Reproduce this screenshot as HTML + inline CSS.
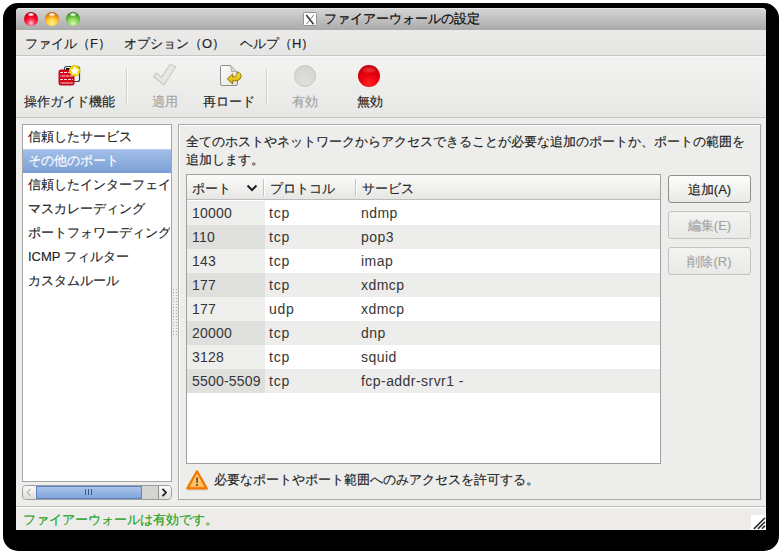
<!DOCTYPE html>
<html><head><meta charset="utf-8">
<style>
*{box-sizing:border-box;margin:0;padding:0}
html,body{width:782px;height:554px;overflow:hidden;background:#fff;font-family:"Liberation Sans",sans-serif;font-size:13px;color:#1e1e1e;position:relative}
div{position:absolute}
.t{white-space:nowrap;line-height:13px;-webkit-text-stroke:0.15px currentColor}
.g{color:#a3a3a1}
#shadow{left:3px;top:3px;width:776px;height:548px;background:#000;border-radius:15px}
#win{left:16px;top:8px;width:750px;height:522px;background:#ededeb;border-radius:4px 4px 0 0}
#title{left:16px;top:8px;width:750px;height:22px;background:linear-gradient(#d4d4d4,#aaaaaa);border-top:1px solid #e6e6e6;border-radius:4px 4px 0 0}
.tl{top:12px;width:14px;height:14px;border-radius:50%}
#menu{left:16px;top:30px;width:750px;height:26px;background:linear-gradient(#ecebea,#e5e5e3);border-bottom:1px solid #c6c6c4}
#tool{left:16px;top:56px;width:750px;height:62px;background:linear-gradient(#f3f3f2,#e7e7e5);border-top:1px solid #fafafa;border-bottom:1px solid #c2c2c0}
.sep{top:69px;width:2px;height:36px;border-left:1px solid #cfcfcd;border-right:1px solid #fbfbfa}
#list{left:22px;top:124px;width:150px;height:358px;background:#fff;border:1px solid #a5a5a3}
.li{left:28px}
#sel{left:23px;top:149px;width:148px;height:24px;background:linear-gradient(#a2bee7,#7a9fd7);border-top:1px solid #b4ccee}
#sb{left:22px;top:485px;width:150px;height:15px;border:1px solid #9d9d9b;border-radius:4px;background:#d4d4d2;overflow:hidden}
#panel{left:178px;top:124px;width:583px;height:376px;border:1px solid #a9a9a7;box-shadow:inset 1px 1px 0 #fff}
#table{left:186px;top:174px;width:475px;height:290px;background:#fff;border:1px solid #a0a09e}
#thead{left:187px;top:175px;width:473px;height:25px;background:linear-gradient(#fbfbfa,#e6e6e4);border-bottom:1px solid #bcbcba}
.hs{top:179px;width:1px;height:17px;background:#c4c4c2;box-shadow:1px 0 0 #fff}
.row{left:187px;width:473px;height:24px}
.c1{left:0;top:0;width:78px;height:24px}
.num{left:192px}
.l{font-size:14px;letter-spacing:0.45px;-webkit-text-stroke:0;color:#363636}
.n{letter-spacing:0.2px}
.pr{letter-spacing:0.75px}
.btn{left:668px;width:83px;height:28px;border:1px solid #8f8f8d;border-radius:3px;background:linear-gradient(#fdfdfc,#e8e8e6);text-align:center}
.btn.dis{border-color:#c2c2c0;background:linear-gradient(#f3f3f2,#e9e9e7)}
#status{left:16px;top:506px;width:750px;height:24px;border-top:1px solid #c0bebb;background:#edecea;box-shadow:inset 0 1px 0 #fff}
</style></head><body>
<div id="shadow"></div>
<div id="win"></div>
<div id="title"></div>
<div class="tl" style="left:24px;background:radial-gradient(circle at 50% 80%,#ffc8d0 0,#ff3050 30%,#f00020 55%,#b00010 85%,#800010)"></div>
<div class="tl" style="left:45px;background:radial-gradient(circle at 50% 80%,#fff088 0,#ffd040 35%,#f09010 60%,#c05000 88%,#904000)"></div>
<div class="tl" style="left:66px;background:radial-gradient(circle at 50% 80%,#d8f8a8 0,#90d860 35%,#50b030 60%,#287818 88%,#1a5a10)"></div>
<svg style="position:absolute;left:303px;top:12px" width="14" height="14" viewBox="0 0 14 14">
  <rect x="0.5" y="0.5" width="13" height="13" rx="0.8" fill="#fdfdfd" stroke="#959595"/>
  <path d="M3.2 3L10.6 12.2" stroke="#383838" stroke-width="1.6"/>
  <path d="M10.8 3L3.4 12.2" stroke="#6a6a6a" stroke-width="0.9"/>
</svg>
<div class="t" style="left:324px;top:12px;color:#0a0a0a;-webkit-text-stroke:0.2px #0a0a0a">ファイアーウォールの設定</div>

<div style="left:28px;top:13px;width:6px;height:3px;border-radius:50%;background:radial-gradient(#fff 0,rgba(255,255,255,.8) 45%,rgba(255,255,255,0) 100%)"></div>
<div style="left:49px;top:13px;width:6px;height:3px;border-radius:50%;background:radial-gradient(#fff 0,rgba(255,255,255,.8) 45%,rgba(255,255,255,0) 100%)"></div>
<div style="left:70px;top:13px;width:6px;height:3px;border-radius:50%;background:radial-gradient(#fff 0,rgba(255,255,255,.8) 45%,rgba(255,255,255,0) 100%)"></div>
<div id="menu"></div>
<div class="t" style="left:25px;top:37px">ファイル（F）</div>
<div class="t" style="left:124px;top:37px">オプション（O）</div>
<div class="t" style="left:240px;top:37px">ヘルプ（H）</div>

<div id="tool"></div>
<div class="sep" style="left:126px"></div>
<div class="sep" style="left:266px"></div>
<div class="t" style="left:24px;top:95px">操作ガイド機能</div>
<div class="t g" style="left:152px;top:95px">適用</div>
<div class="t" style="left:203px;top:95px">再ロード</div>
<div class="t g" style="left:292px;top:95px">有効</div>
<div class="t" style="left:357px;top:95px">無効</div>
<!-- icons -->
<svg style="position:absolute;left:56px;top:64px" width="28" height="24" viewBox="0 0 28 24">
  <rect x="8.5" y="2.5" width="15" height="15" rx="2" fill="#f4f4f4" stroke="#3c3c3c" stroke-width="1.2"/>
  <rect x="10" y="4" width="10" height="7" fill="#101010"/>
  <rect x="3" y="6" width="15" height="15" rx="1.6" fill="#d80818" stroke="#a80010" stroke-width="0.9"/>
  <g fill="#ffd8dc">
    <rect x="4.2" y="8" width="12.6" height="1"/>
    <rect x="4.2" y="11.5" width="12.6" height="1"/>
    <rect x="4.2" y="15" width="12.6" height="1"/>
    <rect x="4.2" y="18.5" width="12.6" height="1"/>
  </g>
  <g fill="#d80818">
    <rect x="7" y="8" width="1" height="1"/><rect x="11" y="8" width="1" height="1"/><rect x="15" y="8" width="1" height="1"/>
    <rect x="5" y="11.5" width="1" height="1"/><rect x="9" y="11.5" width="1" height="1"/><rect x="13" y="11.5" width="1" height="1"/>
    <rect x="7" y="15" width="1" height="1"/><rect x="11" y="15" width="1" height="1"/><rect x="15" y="15" width="1" height="1"/>
    <rect x="5" y="18.5" width="1" height="1"/><rect x="9" y="18.5" width="1" height="1"/><rect x="13" y="18.5" width="1" height="1"/>
  </g>
  <circle cx="18.7" cy="6.7" r="5.3" fill="#f0e010" stroke="#d8c000" stroke-width="0.8"/>
  <path d="M18.7 2.4l1.35 2.8 3.05.4-2.25 2.1.6 3.05-2.75-1.5-2.75 1.5.6-3.05-2.25-2.1 3.05-.4z" fill="#fff"/>
</svg>
<svg style="position:absolute;left:151px;top:62px" width="28" height="26" viewBox="0 0 28 26">
  <path d="M2.5 14.5L5.7 11.2L10.6 15.3L19.2 2.3L24.6 4.8L13 23Z" fill="#e6e8e4" stroke="#c6c8c4" stroke-width="1.1" stroke-linejoin="round"/>
</svg>
<svg style="position:absolute;left:217px;top:63px" width="26" height="24" viewBox="0 0 26 24">
  <defs><linearGradient id="pg" x1="0" y1="0" x2="1" y2="1"><stop offset="0" stop-color="#fdfdfd"/><stop offset="1" stop-color="#e2e2e0"/></linearGradient>
  <linearGradient id="ag" x1="0" y1="0" x2="0" y2="1"><stop offset="0" stop-color="#f8e040"/><stop offset="1" stop-color="#d0a800"/></linearGradient></defs>
  <path d="M3.5 3.5Q3.5 2.5 4.5 2.5H13.5L20.5 9.5V21Q20.5 22.5 19 22.5H5Q3.5 22.5 3.5 21Z" fill="url(#pg)" stroke="#8e8e8c" stroke-width="1"/>
  <path d="M13.5 2.5Q15 7.5 14.5 8.5Q17.5 8 20.5 9.5" fill="#d8d8d6" stroke="#a0a09e" stroke-width="0.8"/>
  <path d="M10.3 15.9L15.6 10.8V13.9C18.4 13.9 20.2 12.4 20.6 8.8C23 9.4 24.4 11.6 24 14C23.4 17.2 20 18.2 15.6 17.9V21Z" fill="url(#ag)" stroke="#8a6e00" stroke-width="0.9" stroke-linejoin="round"/>
</svg>
<div style="left:294px;top:65px;width:22px;height:22px;border-radius:50%;border:1px solid #c6c8c4;background:radial-gradient(circle at 50% 75%,#dfe1dd,#d6d8d4 60%,#cfd1cd)"></div>
<div style="left:358px;top:65px;width:22px;height:22px;border-radius:50%;background:radial-gradient(circle at 50% 85%,#ff2020,#e8000c 45%,#cc0010 75%,#a00010 100%)"></div><div style="left:362px;top:67px;width:14px;height:6px;border-radius:50%;background:radial-gradient(rgba(255,120,120,.45),rgba(255,120,120,0))"></div>

<!-- left list -->
<div id="list"></div>
<div id="sel"></div>
<div class="t li" style="top:130px">信頼したサービス</div>
<div class="t li" style="top:154px;color:#fff">その他のポート</div>
<div class="t li" style="top:178px;width:142px;overflow:hidden">信頼したインターフェイス</div>
<div class="t li" style="top:202px">マスカレーディング</div>
<div class="t li" style="top:226px;width:142px;overflow:hidden">ポートフォワーディング</div>
<div class="t li" style="top:250px">ICMP フィルター</div>
<div class="t li" style="top:274px">カスタムルール</div>

<div id="sb">
  <div style="left:0;top:0;width:14px;height:13px;background:linear-gradient(#fafaf9,#dededc);border-right:1px solid #a8a8a6"></div>
  <div style="left:13px;top:0;width:106px;height:13px;background:linear-gradient(#a9c4eb,#80a4db);border:1px solid #5f83c0"></div>
  <div style="left:135px;top:0;width:14px;height:13px;background:linear-gradient(#fafaf9,#dededc);border-left:1px solid #8f8f8d"></div>
</div>
<svg style="position:absolute;left:26px;top:488px" width="6" height="9" viewBox="0 0 6 9"><path d="M4.5 0.8L1.3 4.5l3.2 3.7" fill="none" stroke="#b4b4b2" stroke-width="1.2"/></svg>
<svg style="position:absolute;left:161px;top:488px" width="7" height="9" viewBox="0 0 7 9"><path d="M1.5 0.8L5 4.5L1.5 8.2" fill="none" stroke="#1e1e1e" stroke-width="1.8"/></svg>
<div style="left:85px;top:489px;width:1px;height:6px;background:#3a5a90"></div>
<div style="left:88px;top:489px;width:1px;height:6px;background:#3a5a90"></div>
<div style="left:91px;top:489px;width:1px;height:6px;background:#3a5a90"></div>

<div style="left:173px;top:289px;width:1px;height:1px;background:#a8a8a6;box-shadow:3px 0 0 #a8a8a6"></div>
<div style="left:173px;top:292px;width:1px;height:1px;background:#a8a8a6;box-shadow:3px 0 0 #a8a8a6"></div>
<div style="left:173px;top:295px;width:1px;height:1px;background:#a8a8a6;box-shadow:3px 0 0 #a8a8a6"></div>
<div style="left:173px;top:298px;width:1px;height:1px;background:#a8a8a6;box-shadow:3px 0 0 #a8a8a6"></div>
<div style="left:173px;top:301px;width:1px;height:1px;background:#a8a8a6;box-shadow:3px 0 0 #a8a8a6"></div>
<div style="left:173px;top:304px;width:1px;height:1px;background:#a8a8a6;box-shadow:3px 0 0 #a8a8a6"></div>
<div style="left:173px;top:307px;width:1px;height:1px;background:#a8a8a6;box-shadow:3px 0 0 #a8a8a6"></div>
<div style="left:173px;top:310px;width:1px;height:1px;background:#a8a8a6;box-shadow:3px 0 0 #a8a8a6"></div>
<div style="left:173px;top:313px;width:1px;height:1px;background:#a8a8a6;box-shadow:3px 0 0 #a8a8a6"></div>
<div style="left:173px;top:316px;width:1px;height:1px;background:#a8a8a6;box-shadow:3px 0 0 #a8a8a6"></div>
<div style="left:173px;top:319px;width:1px;height:1px;background:#a8a8a6;box-shadow:3px 0 0 #a8a8a6"></div>
<div style="left:173px;top:322px;width:1px;height:1px;background:#a8a8a6;box-shadow:3px 0 0 #a8a8a6"></div>
<div style="left:173px;top:325px;width:1px;height:1px;background:#a8a8a6;box-shadow:3px 0 0 #a8a8a6"></div>
<div style="left:173px;top:328px;width:1px;height:1px;background:#a8a8a6;box-shadow:3px 0 0 #a8a8a6"></div>
<div style="left:173px;top:331px;width:1px;height:1px;background:#a8a8a6;box-shadow:3px 0 0 #a8a8a6"></div>
<div style="left:173px;top:334px;width:1px;height:1px;background:#a8a8a6;box-shadow:3px 0 0 #a8a8a6"></div>
<!-- right panel -->
<div id="panel"></div>
<div class="t" style="left:186px;top:135px">全てのホストやネットワークからアクセスできることが必要な追加のポートか、ポートの範囲を</div>
<div class="t" style="left:186px;top:153px">追加します。</div>
<div id="table"></div>
<div id="thead"></div>
<div class="hs" style="left:263px"></div>
<div class="hs" style="left:355px"></div>
<div class="t" style="left:192px;top:182px">ポート</div>
<svg style="position:absolute;left:246px;top:184px" width="12" height="8" viewBox="0 0 12 8"><path d="M1.5 1.5l4.5 4.5 4.5-4.5" fill="none" stroke="#222" stroke-width="2"/></svg>
<div class="t" style="left:270px;top:182px">プロトコル</div>
<div class="t" style="left:362px;top:182px">サービス</div>

<div class="row" style="top:201px;background:#fff"><div class="c1" style="background:#eeeeed"></div></div>
<div class="row" style="top:225px;background:#ededec"><div class="c1" style="background:#dfdfde"></div></div>
<div class="row" style="top:249px;background:#fff"><div class="c1" style="background:#eeeeed"></div></div>
<div class="row" style="top:273px;background:#ededec"><div class="c1" style="background:#dfdfde"></div></div>
<div class="row" style="top:297px;background:#fff"><div class="c1" style="background:#eeeeed"></div></div>
<div class="row" style="top:321px;background:#ededec"><div class="c1" style="background:#dfdfde"></div></div>
<div class="row" style="top:345px;background:#fff"><div class="c1" style="background:#eeeeed"></div></div>
<div class="row" style="top:369px;background:#ededec"><div class="c1" style="background:#dfdfde"></div></div>

<div class="t num l n" style="top:207px">10000</div><div class="t l pr" style="left:269px;top:207px">tcp</div><div class="t l" style="left:361px;top:207px">ndmp</div>
<div class="t num l n" style="top:231px">110</div><div class="t l pr" style="left:269px;top:231px">tcp</div><div class="t l" style="left:361px;top:231px">pop3</div>
<div class="t num l n" style="top:255px">143</div><div class="t l pr" style="left:269px;top:255px">tcp</div><div class="t l" style="left:361px;top:255px">imap</div>
<div class="t num l n" style="top:279px">177</div><div class="t l pr" style="left:269px;top:279px">tcp</div><div class="t l" style="left:361px;top:279px">xdmcp</div>
<div class="t num l n" style="top:303px">177</div><div class="t l pr" style="left:269px;top:303px">udp</div><div class="t l" style="left:361px;top:303px">xdmcp</div>
<div class="t num l n" style="top:327px">20000</div><div class="t l pr" style="left:269px;top:327px">tcp</div><div class="t l" style="left:361px;top:327px">dnp</div>
<div class="t num l n" style="top:351px">3128</div><div class="t l pr" style="left:269px;top:351px">tcp</div><div class="t l" style="left:361px;top:351px">squid</div>
<div class="t num l n" style="top:375px">5500-5509</div><div class="t l pr" style="left:269px;top:375px">tcp</div><div class="t l" style="left:361px;top:375px">fcp-addr-srvr1 -</div>

<div class="btn" style="top:175px"><div class="t" style="left:0;width:81px;top:7px">追加(A)</div></div>
<div class="btn dis" style="top:211px"><div class="t g" style="left:0;width:81px;top:7px">編集(E)</div></div>
<div class="btn dis" style="top:247px"><div class="t g" style="left:0;width:81px;top:7px">削除(R)</div></div>

<svg style="position:absolute;left:185px;top:468px" width="24" height="24" viewBox="0 0 24 24">
  <defs><linearGradient id="wg" x1="0" y1="0" x2="0" y2="1"><stop offset="0" stop-color="#ffe0a0"/><stop offset="1" stop-color="#ffb850"/></linearGradient></defs>
  <path d="M12.5 4.8L22 21.2H3z" fill="none" stroke="#000" stroke-opacity="0.12" stroke-width="2.6" stroke-linejoin="round"/>
  <path d="M12 3.4L21.6 20.4H2.4z" fill="url(#wg)" stroke="#f27800" stroke-width="2.3" stroke-linejoin="round"/>
  <path d="M11.3 9.6h1.5l-.3 5.6h-.9z" fill="#2a2010"/>
  <rect x="11.25" y="16.3" width="1.5" height="1.6" fill="#2a2010"/>
</svg>
<div class="t" style="left:214px;top:473px">必要なポートやポート範囲へのみアクセスを許可する。</div>

<div id="status"></div>
<div class="t" style="left:23px;top:513px;color:#17a017">ファイアーウォールは有効です。</div>
<div style="left:751px;top:515px;width:15px;height:15px;background:#fff"></div>
<svg style="position:absolute;left:751px;top:515px" width="15" height="15" viewBox="0 0 15 15">
  <path d="M3.4 13.4L13.6 3.3M7.4 13.4L13.6 7.3M11.4 13.2L13.6 11.1" stroke="#2a2a2a" stroke-width="1.5" stroke-linecap="round"/>
</svg>
</body></html>
